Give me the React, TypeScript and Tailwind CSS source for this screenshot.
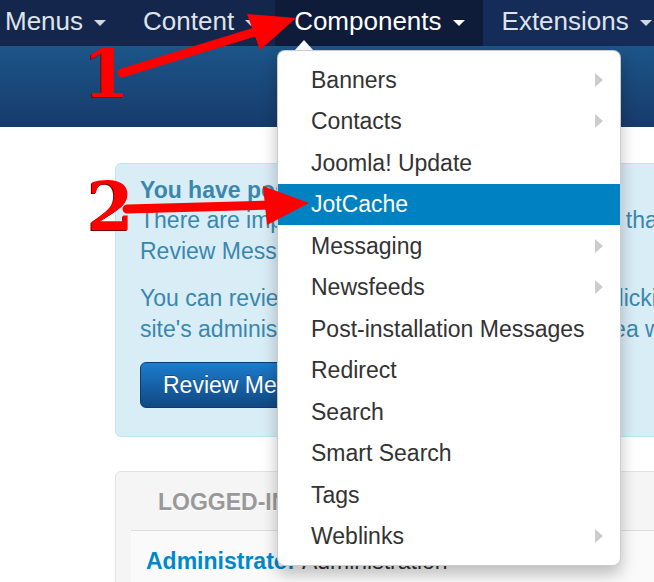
const navItems = [
  { label: "Menus", active: false },
  { label: "Content", active: false },
  { label: "Components", active: true },
  { label: "Extensions", active: false },
];

const componentItems = [
  { label: "Banners", sub: true },
  { label: "Contacts", sub: true },
  { label: "Joomla! Update", sub: false },
  { label: "JotCache", sub: false, active: true },
  { label: "Messaging", sub: true },
  { label: "Newsfeeds", sub: true },
  { label: "Post-installation Messages", sub: false },
  { label: "Redirect", sub: false },
  { label: "Search", sub: false },
  { label: "Smart Search", sub: false },
  { label: "Tags", sub: false },
  { label: "Weblinks", sub: true },
];

export default function App() {
  return (
    <div className="relative w-[654px] h-[582px] overflow-hidden bg-white font-['Liberation_Sans',Arial,sans-serif]">
      {/* Top navbar */}
      <nav className="flex h-[46px] bg-[#14264b] ml-[-14px] w-[700px]">
        {navItems.map((item) => (
          <div
            key={item.label}
            className={`flex items-center gap-[11px] pl-[19px] pr-[18px] h-[46px] pb-[4px] text-[26px] ${
              item.active
                ? "bg-[#0f1c39] text-white"
                : item.label === "Extensions"
                ? "bg-[#152b58] text-[#dfe3ea] flex-1"
                : "text-[#dfe3ea]"
            }`}
          >
            <span className="leading-[38px]">{item.label}</span>
            <span
              className={`mt-[4px] w-0 h-0 border-l-[6px] border-r-[6px] border-t-[6px] border-l-transparent border-r-transparent ${
                item.active ? "border-t-white" : "border-t-[#d3d7de]"
              }`}
            />
          </div>
        ))}
      </nav>

      {/* Blue subheader band */}
      <div className="h-[81px] bg-gradient-to-b from-[#1c5589] to-[#173b6b]" />

      {/* Page content */}
      <div className="pl-[115px] pt-[36px]">
        <div className="w-[900px] rounded-[6px] border border-[#bce8f1] bg-[#d9edf7] pl-[24px] pt-[12px] pb-[28px] text-[#3a87ad]">
          <h4 className="text-[23px] font-bold leading-[29px] whitespace-nowrap">
            You have post-installation messages
          </h4>
          <div className="text-[23px] leading-[31px] whitespace-nowrap">
            <p>There are important post-installation messages that require your attention.</p>
            <p>Review Messages</p>
          </div>
          <div className="mt-[16px] text-[23px] leading-[31px] whitespace-nowrap">
            <p>
              You can review the messages at any time, by clicking on Components, Post-installation Messages in your
            </p>
            <p>
              site's administrator section. This information area won't appear when you have hidden all the messages.
            </p>
          </div>
          <button className="mt-[17px] flex h-[46px] items-center rounded-[6px] border border-[#0c3d70] bg-gradient-to-b from-[#1b7dce] to-[#114882] px-[22px] text-[23px] text-white [text-shadow:0_-1px_0_rgba(0,0,0,0.25)]">
            Review Messages
          </button>
        </div>

        <div className="mt-[34px] w-[900px] rounded-[6px] border border-[#e3e3e3] bg-[#f5f5f5] px-[15px] pt-[14px]">
          <h2 className="border-b border-[#dddddd] pb-[12px] pl-[27px] text-[23px] font-bold uppercase leading-[32px] text-[#999999] [text-shadow:0_1px_0_#fff]">
            Logged-in Users
          </h2>
          <div className="bg-[#fafafa] pl-[15px] pt-[15px] pb-[12px] text-[23px] leading-[31px] whitespace-nowrap">
            <span className="font-bold text-[#0088cc]">Administrator</span>{" "}
            <span className="text-[#333333]">Administration</span>
          </div>
        </div>
      </div>

      {/* Components dropdown */}
      <div className="absolute left-[295px] top-[40px] w-0 h-0 border-l-[9px] border-r-[9px] border-b-[10px] border-l-transparent border-r-transparent border-b-white" />
      <div className="absolute left-[277px] top-[50px] w-[344px] rounded-[8px] border border-black/20 bg-white py-[8px] shadow-[0_8px_16px_rgba(0,0,0,0.25)]">
        {componentItems.map((item) => (
          <div
            key={item.label}
            className={`relative flex h-[41.5px] items-center pl-[33px] text-[23px] whitespace-nowrap ${
              item.active ? "bg-[#0081c2] text-white" : "text-[#333333]"
            }`}
          >
            {item.label}
            {item.sub && (
              <span className="absolute right-[17px] top-1/2 -translate-y-1/2 w-0 h-0 border-t-[7.5px] border-b-[7.5px] border-l-[8px] border-t-transparent border-b-transparent border-l-[#cccccc]" />
            )}
          </div>
        ))}
      </div>

      {/* Red annotation arrows */}
      <svg className="absolute left-0 top-0" width="654" height="582" viewBox="0 0 654 582">
        <line x1="122" y1="73" x2="258" y2="31" stroke="#ff0000" strokeWidth="9" strokeLinecap="round" />
        <polygon points="296,18 247,14 260,50" fill="#ff0000" />
        <line x1="127" y1="209" x2="270" y2="205" stroke="#ff0000" strokeWidth="9" strokeLinecap="round" />
        <polygon points="309,203 263,186 267,225" fill="#ff0000" />
      </svg>
      <span className="absolute left-[83px] top-[40px] font-['DejaVu_Serif',serif] text-[67px] font-bold leading-none text-[#ff0000] [text-shadow:-1px_1px_0_#7a0000]">
        1
      </span>
      <span className="absolute left-[87px] top-[173px] font-['DejaVu_Serif',serif] text-[67px] font-bold leading-none text-[#ff0000] [text-shadow:-1px_1px_0_#7a0000]">
        2
      </span>
    </div>
  );
}
